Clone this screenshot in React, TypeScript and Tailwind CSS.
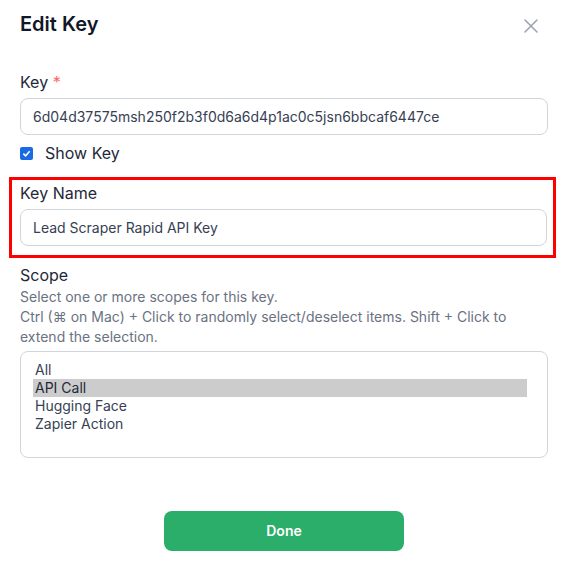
import { useState } from 'react';

const scopes = ['All', 'API Call', 'Hugging Face', 'Zapier Action'];

export default function App() {
    const [showKey, setShowKey] = useState(true);
    const [selected, setSelected] = useState<string[]>(['API Call']);

    return (
        <div className="min-h-[571px] w-[567px] bg-white font-['Inter',sans-serif] text-gray-800">
            <div className="ml-5 w-[528px] pt-[10px]">
                {/* Header */}
                <div className="flex items-center justify-between">
                    <h1 className="text-xl font-semibold leading-7 text-gray-900">Edit Key</h1>
                    <button className="mr-[9px] mt-[4px] text-gray-400">
                        <svg width="16" height="16" viewBox="0 0 16 16" fill="none" stroke="currentColor" strokeWidth="1.5" strokeLinecap="round">
                            <path d="M2 2 L14 14 M14 2 L2 14" />
                        </svg>
                    </button>
                </div>

                {/* Key */}
                <label className="mt-8 block text-base leading-6 text-gray-800">
                    Key <span className="text-red-400">*</span>
                </label>
                <div className="mt-1 flex h-[37px] items-center rounded-lg border border-gray-300 px-3 text-sm text-gray-700">
                    6d04d37575msh250f2b3f0d6a6d4p1ac0c5jsn6bbcaf6447ce
                </div>

                <label className="mt-[9px] flex h-[18px] items-center gap-[12px] text-base text-gray-800">
                    <span
                        onClick={() => setShowKey(!showKey)}
                        className={`flex h-[13px] w-[13px] items-center justify-center rounded-[2px] ${showKey ? 'bg-[#1a6ae6]' : 'border border-gray-400'}`}
                    >
                        {showKey && (
                            <svg width="9" height="9" viewBox="0 0 10 10" fill="none" stroke="white" strokeWidth="1.8">
                                <path d="M1.5 5.2 L4 7.5 L8.5 2.5" />
                            </svg>
                        )}
                    </span>
                    Show Key
                </label>
            </div>

            {/* Key Name - highlighted */}
            <div className="ml-[9px] mt-[15px] w-[547px] border-[3px] border-[#ff0000] pb-[9px] pl-[8px] pr-[6px] pt-[1px]">
                <label className="block text-base leading-6 text-gray-800">Key Name</label>
                <div className="mt-1 flex h-[37px] items-center rounded-lg border border-gray-300 px-3 text-sm text-gray-700">
                    Lead Scraper Rapid API Key
                </div>
            </div>

            <div className="ml-5 w-[528px]">
                {/* Scope */}
                <label className="mt-[5px] block text-base leading-6 text-gray-800">Scope</label>
                <p className="text-sm leading-5 text-gray-500">
                    Select one or more scopes for this key.
                    <br />
                    Ctrl (⌘ on Mac) + Click to randomly select/deselect items. Shift + Click to extend the selection.
                </p>
                <div className="mt-1 h-[107px] rounded-lg border border-gray-300 pl-[12px] pr-[20px] pt-[9px]">
                    {scopes.map((s) => (
                        <div
                            key={s}
                            onClick={() =>
                                setSelected(selected.includes(s) ? selected.filter((x) => x !== s) : [...selected, s])
                            }
                            className={`h-[18px] px-[2px] text-sm leading-[18px] ${selected.includes(s) ? 'bg-[#cccccc] text-gray-800' : 'text-gray-700'}`}
                        >
                            {s}
                        </div>
                    ))}
                </div>

                {/* Footer */}
                <div className="mt-[53px] flex justify-center">
                    <button className="h-10 w-[240px] rounded-lg bg-[#2bae6a] text-sm font-semibold text-white">
                        Done
                    </button>
                </div>
            </div>
        </div>
    );
}
